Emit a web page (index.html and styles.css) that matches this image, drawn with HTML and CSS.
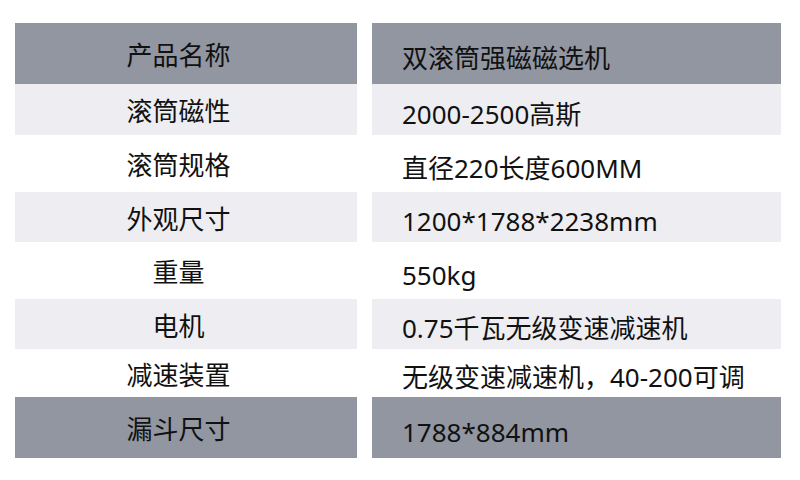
FILE: index.html
```html
<!DOCTYPE html>
<html lang="zh">
<head>
<meta charset="utf-8">
<link rel="stylesheet" href="styles.css">
</head>
<body>
<div class="table">
  <div class="cell key dark r-head">产品名称</div>
  <div class="cell val dark r-head">双滚筒强磁磁选机</div>

  <div class="cell key light r-a">滚筒磁性</div>
  <div class="cell val light r-a">2000-2500高斯</div>

  <div class="cell key r-b">滚筒规格</div>
  <div class="cell val r-b">直径220长度600MM</div>

  <div class="cell key light r-c">外观尺寸</div>
  <div class="cell val light r-c">1200*1788*2238mm</div>

  <div class="cell key r-b">重量</div>
  <div class="cell val r-b">550kg</div>

  <div class="cell key light r-c">电机</div>
  <div class="cell val light r-c">0.75千瓦无级变速减速机</div>

  <div class="cell key r-d">减速装置</div>
  <div class="cell val r-d">无级变速减速机，40-200可调</div>

  <div class="cell key dark r-head">漏斗尺寸</div>
  <div class="cell val dark r-head">1788*884mm</div>
</div>
</body>
</html>
```

FILE: styles.css
```css
html, body {
  margin: 0;
  padding: 0;
  background: #ffffff;
}

body {
  width: 800px;
  height: 480px;
  overflow: hidden;
  font-family: "Noto Sans", "Noto Sans CJK SC", sans-serif;
  color: #111111;
}

.table {
  display: grid;
  grid-template-columns: 342px 409px;
  column-gap: 15px;
  padding: 23px 0 0 15px;
}

.cell {
  display: flex;
  align-items: center;
  font-size: 26px;
  line-height: 1;
  white-space: nowrap;
  box-sizing: border-box;
}

.key {
  justify-content: center;
  padding-top: 3px;
  padding-right: 15px;
}

.val {
  justify-content: flex-start;
  padding-left: 30px;
  padding-top: 8px;
}

.dark {
  background: #9196a1;
}

.light {
  background: #eeeef2;
}

.r-head { height: 61px; }
.r-a { height: 51px; }
.r-b { height: 57px; }
.r-c { height: 50px; }
.r-d { height: 48px; }
```
